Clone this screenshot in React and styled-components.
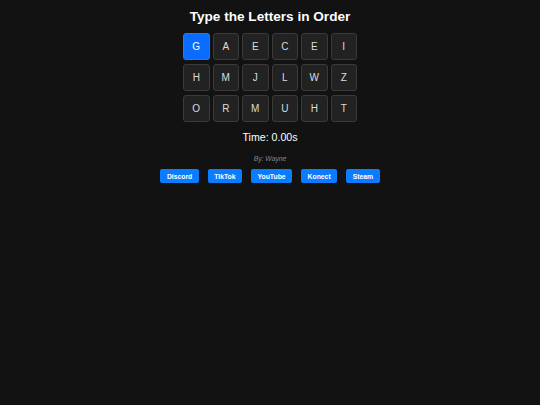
import React from "react";
import styled, { createGlobalStyle } from "styled-components";

const GlobalStyle = createGlobalStyle`
  html, body {
    margin: 0;
    padding: 0;
    background: #121212;
    font-family: "Liberation Sans", Arial, sans-serif;
  }
`;

const Page = styled.main`
  min-height: 405px;
  display: flex;
  flex-direction: column;
  align-items: center;
  padding-top: 8px;
  box-sizing: border-box;
  color: #fff;
`;

const Title = styled.h1`
  margin: 0;
  font-size: 13.6px;
  font-weight: bold;
  line-height: 17px;
`;

const Grid = styled.div`
  display: grid;
  grid-template-columns: repeat(6, 26.5px);
  grid-auto-rows: 27px;
  column-gap: 3px;
  row-gap: 4px;
  margin-top: 8px;
`;

const Tile = styled.div`
  display: flex;
  align-items: center;
  justify-content: center;
  box-sizing: border-box;
  border-radius: 3px;
  border: 1px solid ${(p) => (p.$active ? "#1a7cff" : "#3a3a3a")};
  background: ${(p) => (p.$active ? "#0a6cff" : "#222")};
  color: ${(p) => (p.$active ? "#fff" : "#ddd")};
  font-size: 10px;
`;

const Time = styled.div`
  margin-top: 9px;
  font-size: 10.6px;
  line-height: 13px;
`;

const Credit = styled.div`
  margin-top: 11px;
  font-size: 6.8px;
  font-style: italic;
  color: #888;
`;

const Links = styled.div`
  display: flex;
  gap: 9px;
  margin-top: 7px;
`;

const LinkButton = styled.a`
  display: flex;
  align-items: center;
  justify-content: center;
  height: 14px;
  padding: 0 6.5px;
  background: #0a7cff;
  color: #fff;
  border-radius: 2px;
  font-size: 6.8px;
  font-weight: bold;
  text-decoration: none;
`;

const rows = ["GAECEI", "HMJLWZ", "ORMUHT"];
const links = ["Discord", "TikTok", "YouTube", "Konect", "Steam"];

const App = () => {
  return (
    <>
      <GlobalStyle />
      <Page>
        <Title>Type the Letters in Order</Title>
        <Grid>
          {rows.join("").split("").map((l, i) => (
            <Tile key={i} $active={i === 0}>
              {l}
            </Tile>
          ))}
        </Grid>
        <Time>Time: 0.00s</Time>
        <Credit>By: Wayne</Credit>
        <Links>
          {links.map((name) => (
            <LinkButton key={name} href="#">
              {name}
            </LinkButton>
          ))}
        </Links>
      </Page>
    </>
  );
};

export default App;
